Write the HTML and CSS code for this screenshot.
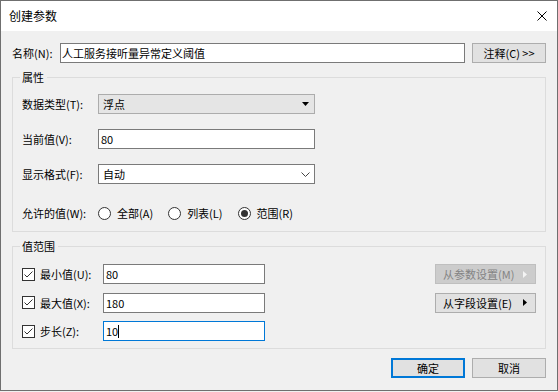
FILE: index.html
```html
<!DOCTYPE html>
<html lang="zh-CN">
<head>
    <meta charset="UTF-8">
    <title>创建参数</title>
    <link rel="stylesheet" href="styles.css">
</head>
<body>
    <div class="window">
        <div class="titlebar">
            <span class="title">创建参数</span>
            <svg class="close" width="10" height="10" viewBox="0 0 10 10">
                <path d="M0.5 0.5 L9.5 9.5 M9.5 0.5 L0.5 9.5" stroke="#000" stroke-width="1" fill="none"/>
            </svg>
        </div>

        <div class="content">
            <div class="name-row">
                <span class="name-label">名称(N):</span>
                <div class="field name-field">人工服务接听量异常定义阈值</div>
                <button class="btn note-btn">注释(C) &gt;&gt;</button>
            </div>

            <fieldset class="group props">
                <legend>属性</legend>
                <div class="prop-row">
                    <span class="prop-label">数据类型(T):</span>
                    <div class="combo readonly">
                        <span>浮点</span>
                        <svg width="7" height="4" viewBox="0 0 7 4"><path d="M0 0 H7 L3.5 4 Z" fill="#000"/></svg>
                    </div>
                </div>
                <div class="prop-row">
                    <span class="prop-label">当前值(V):</span>
                    <div class="field prop-field">80</div>
                </div>
                <div class="prop-row">
                    <span class="prop-label">显示格式(F):</span>
                    <div class="combo editable">
                        <span>自动</span>
                        <svg width="9" height="5" viewBox="0 0 9 5"><path d="M0.5 0.5 L4.5 4.5 L8.5 0.5" stroke="#444" stroke-width="1" fill="none"/></svg>
                    </div>
                </div>
                <div class="prop-row radios">
                    <span class="prop-label">允许的值(W):</span>
                    <span class="radio"><i class="dot"></i>全部(A)</span>
                    <span class="radio"><i class="dot"></i>列表(L)</span>
                    <span class="radio"><i class="dot checked"></i>范围(R)</span>
                </div>
            </fieldset>

            <fieldset class="group range">
                <legend>值范围</legend>
                <div class="range-grid">
                    <span class="check-label"><i class="box"><svg width="11" height="11" viewBox="0 0 11 11"><path d="M1.5 5.5 L4 8 L9.5 2.5" stroke="#333" stroke-width="1" fill="none"/></svg></i>最小值(U):</span>
                    <div class="field">80</div>
                    <button class="btn side-btn disabled">
                        <span>从参数设置(M)</span>
                        <svg width="4" height="7" viewBox="0 0 4 7"><path d="M0 0 L4 3.5 L0 7 Z" fill="#f4f4f4"/></svg>
                    </button>

                    <span class="check-label"><i class="box"><svg width="11" height="11" viewBox="0 0 11 11"><path d="M1.5 5.5 L4 8 L9.5 2.5" stroke="#333" stroke-width="1" fill="none"/></svg></i>最大值(X):</span>
                    <div class="field">180</div>
                    <button class="btn side-btn">
                        <span>从字段设置(E)</span>
                        <svg width="4" height="7" viewBox="0 0 4 7"><path d="M0 0 L4 3.5 L0 7 Z" fill="#000"/></svg>
                    </button>

                    <span class="check-label"><i class="box"><svg width="11" height="11" viewBox="0 0 11 11"><path d="M1.5 5.5 L4 8 L9.5 2.5" stroke="#333" stroke-width="1" fill="none"/></svg></i>步长(Z):</span>
                    <div class="field focused">10<span class="caret"></span></div>
                </div>
            </fieldset>

            <div class="footer">
                <button class="btn default">确定</button>
                <button class="btn">取消</button>
            </div>
        </div>
    </div>
</body>
</html>
```

FILE: styles.css
```css
* {
    box-sizing: border-box;
}

body {
    margin: 0;
    background-color: #f0f0f0;
    font-family: "Noto Sans CJK SC", "Noto Sans", sans-serif;
    font-size: 11px;
    line-height: 16px;
    color: #000;
}

.window {
    width: 558px;
    height: 391px;
    border: 1px solid #6f6f6f;
    background-color: #f0f0f0;
    display: flex;
    flex-direction: column;
}

.titlebar {
    height: 30px;
    background-color: #fff;
    display: flex;
    align-items: center;
    justify-content: space-between;
    padding: 0 10px 0 8px;
}

.title {
    font-size: 12px;
}

.close {
    display: block;
}

.content {
    padding: 12px 11px 0 11px;
}

.name-row {
    display: flex;
    align-items: center;
    height: 20px;
}

.name-label {
    width: 48px;
}

.field {
    height: 20px;
    border: 1px solid #7a7a7a;
    background-color: #fff;
    padding: 0 2px;
    line-height: 18px;
    white-space: nowrap;
}

.field.focused {
    border-color: #0078d7;
}

.caret {
    display: inline-block;
    width: 1px;
    height: 13px;
    background-color: #000;
    vertical-align: -2px;
}

.name-field {
    width: 405px;
    padding-left: 1px;
}

.btn {
    font: inherit;
    height: 20px;
    background-color: #e1e1e1;
    border: 1px solid #adadad;
    padding: 0;
    color: #000;
}

.note-btn {
    width: 74px;
    margin-left: 7px;
}

/* group boxes */
.group {
    margin: 6px 0 0;
    border: 1px solid #dcdcdc;
    padding: 9px 9px 8px 9px;
}

.group legend {
    padding: 0 3px 0 2px;
    margin-left: -2px;
    line-height: 16px;
}

.range {
    padding-top: 10px;
    padding-bottom: 7px;
}

.prop-row {
    display: flex;
    align-items: center;
    height: 20px;
    margin-bottom: 15px;
}

.prop-row:last-child {
    margin-bottom: 0;
}

.prop-row.radios {
    margin-top: 19px;
}

.prop-label {
    width: 76px;
}

.prop-field,
.combo {
    width: 217px;
}

.combo {
    height: 20px;
    display: flex;
    align-items: center;
    justify-content: space-between;
    padding: 0 4px 0 4px;
}

.combo.readonly {
    background-color: #e5e5e5;
    border: 1px solid #acacac;
    padding-right: 5px;
}

.combo.editable {
    background-color: #fff;
    border: 1px solid #7a7a7a;
}

.combo svg {
    display: block;
}

.radio {
    display: flex;
    align-items: center;
    gap: 6px;
    margin-right: 15px;
}

.dot {
    width: 13px;
    height: 13px;
    border: 1px solid #333;
    border-radius: 50%;
    background-color: #fff;
    display: flex;
    align-items: center;
    justify-content: center;
}

.dot.checked::after {
    content: "";
    width: 7px;
    height: 7px;
    border-radius: 50%;
    background-color: #333;
}

/* value range */
.range-grid {
    display: grid;
    grid-template-columns: 81px 162px 1fr 101px;
    grid-auto-rows: 20px;
    row-gap: 8.5px;
    align-items: center;
}

.range-grid .check-label {
    grid-column: 1;
}

.range-grid .field {
    grid-column: 2;
}

.check-label {
    display: flex;
    align-items: center;
    gap: 5px;
}

.box {
    width: 13px;
    height: 13px;
    border: 1px solid #333;
    background-color: #fff;
    display: block;
}

.box svg {
    display: block;
}

.side-btn {
    grid-column: 4;
    display: flex;
    align-items: center;
    justify-content: space-between;
    padding: 0 8px 0 7px;
}

.side-btn.disabled {
    background-color: #cccccc;
    border-color: #bfbfbf;
    color: #838383;
}

.footer {
    display: flex;
    justify-content: flex-end;
    gap: 7px;
    margin-top: 9px;
}

.footer .btn {
    width: 74px;
}

.footer .btn.default {
    border: 2px solid #0078d7;
}
```
